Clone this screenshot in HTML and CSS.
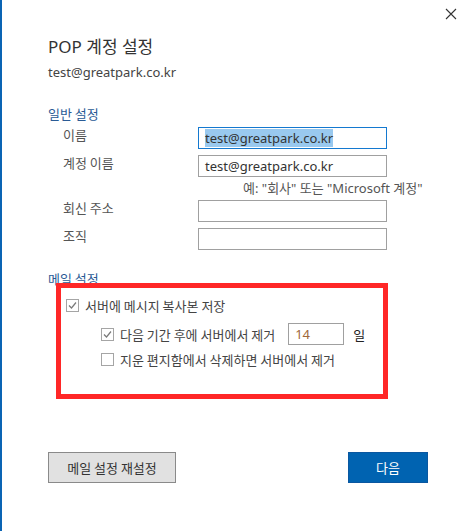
FILE: index.html
```html
<!DOCTYPE html>
<html>
  <head>
    <title>POP 계정 설정</title>
    <meta charset="utf-8">
    <link rel="stylesheet" href="styles.css">
  </head>
  <body>
    <div class="dialog">
      <div class="closebtn">
        <svg width="12" height="12" viewBox="0 0 12 12"><path d="M1 1 L11 11 M11 1 L1 11" stroke="#333" stroke-width="1.1" fill="none"/></svg>
      </div>

      <div class="title">POP 계정 설정</div>
      <div class="account">test@greatpark.co.kr</div>

      <div class="section">일반 설정</div>
      <div class="form">
        <div class="label">이름</div>
        <div class="field focused"><span class="selected">test@greatpark.co.kr</span></div>
        <div class="label">계정 이름</div>
        <div class="field">test@greatpark.co.kr</div>
        <div class="hint">예: "회사" 또는 "Microsoft 계정"</div>
        <div class="label">회신 주소</div>
        <div class="field"></div>
        <div class="label">조직</div>
        <div class="field"></div>
      </div>

      <div class="section mail">메일 설정</div>
      <div class="options">
        <div class="opt">
          <span class="chk on"><svg width="11" height="11" viewBox="0 0 11 11"><path d="M2 5.5 L4.5 8 L9 2.5" stroke="#7a7a7a" stroke-width="1.2" fill="none"/></svg></span>
          서버에 메시지 복사본 저장
        </div>
        <div class="opt sub">
          <span class="chk on"><svg width="11" height="11" viewBox="0 0 11 11"><path d="M2 5.5 L4.5 8 L9 2.5" stroke="#7a7a7a" stroke-width="1.2" fill="none"/></svg></span>
          다음 기간 후에 서버에서 제거
          <div class="days">14</div>
          <span class="unit">일</span>
        </div>
        <div class="opt sub third">
          <span class="chk"></span>
          지운 편지함에서 삭제하면 서버에서 제거
        </div>
      </div>

      <div class="buttons">
        <div class="btn reset">메일 설정 재설정</div>
        <div class="btn next">다음</div>
      </div>

      <div class="highlight"></div>
    </div>
  </body>
</html>
```

FILE: styles.css
```css
html, body {
  margin: 0;
  padding: 0;
  background: white;
}
body {
  font-family: "Open Sans", "Noto Sans CJK KR", sans-serif;
  font-size: 13px;
  color: #444;
}
.dialog {
  position: relative;
  height: 531px;
  box-sizing: border-box;
  border-left: 2px solid #0a64b4;
  padding: 34px 0 0 46px;
}
.closebtn {
  position: absolute;
  top: 8px;
  right: 17px;
  line-height: 0;
}
.title {
  font-size: 17px;
  line-height: 26px;
  color: #333;
  font-family: "Noto Sans", "Noto Sans CJK KR", sans-serif;
}
.account {
  margin-top: 3px;
  line-height: 18px;
  color: #444;
  font-family: "Noto Sans", "Noto Sans CJK KR", sans-serif;
}
.section {
  margin-top: 24px;
  color: #2a5b95;
  font-size: 13px;
  line-height: 18px;
  font-family: "Noto Sans CJK KR", sans-serif;
}
.form {
  display: grid;
  grid-template-columns: 150px 189px;
  row-gap: 6px;
  margin-top: 4px;
}
.label {
  padding-left: 15px;
  line-height: 16px;
  color: #555;
  font-family: "Noto Sans CJK KR", sans-serif;
}
.field {
  height: 22px;
  box-sizing: border-box;
  border: 1px solid #a0a0a0;
  padding: 0 6px;
  line-height: 20px;
  color: #333;
  font-family: "Noto Sans", sans-serif;
  font-size: 13px;
}
.field.focused {
  border-color: #1479d0;
}
.selected {
  background: #99c9ef;
}
.hint {
  grid-column: 1 / 3;
  padding-left: 195px;
  margin: -4px -40px -3px 0;
  line-height: 18px;
  color: #555;
  white-space: nowrap;
  font-family: "Noto Sans", "Noto Sans CJK KR", sans-serif;
}
.section.mail {
  margin-top: 20px;
}
.options {
  padding-left: 18px;
  margin-top: 6px;
  font-family: "Noto Sans CJK KR", sans-serif;
  color: #444;
}
.opt {
  display: flex;
  align-items: center;
  gap: 6px;
  height: 22px;
}
.opt.sub {
  padding-left: 35px;
  margin-top: 7px;
}
.opt.third {
  margin-top: 3px;
}
.chk {
  width: 13px;
  height: 13px;
  box-sizing: border-box;
  border: 1px solid #a5a5a5;
  display: inline-flex;
  align-items: center;
  justify-content: center;
  background: white;
}
.days {
  margin-left: 7px;
  width: 56px;
  height: 22px;
  box-sizing: border-box;
  border: 1px solid #a0a0a0;
  padding: 0 6px;
  line-height: 20px;
  color: #a0683a;
  font-family: "Noto Sans", sans-serif;
}
.unit {
  margin-left: 3px;
  color: #222;
}
.buttons {
  display: flex;
  justify-content: space-between;
  width: 380px;
  margin-top: 82px;
}
.btn {
  height: 31px;
  box-sizing: border-box;
  display: flex;
  align-items: center;
  justify-content: center;
  font-family: "Noto Sans CJK KR", sans-serif;
  font-size: 13px;
}
.btn.reset {
  width: 128px;
  background: #e1e1e1;
  border: 1px solid #8a8a8a;
  color: #333;
}
.btn.next {
  width: 80px;
  background: #0063b1;
  border: 1px solid #0a57a0;
  color: white;
}
.highlight {
  position: absolute;
  left: 54px;
  top: 283px;
  width: 332px;
  height: 116px;
  box-sizing: border-box;
  border: 5px solid #ff2727;
}
```
